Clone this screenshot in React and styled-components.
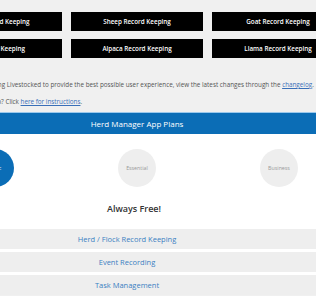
import React from "react";
import styled, { createGlobalStyle } from "styled-components";

const GlobalStyle = createGlobalStyle`
	html, body {
		margin: 0;
		padding: 0;
		background: #f0f0f0;
		overflow: hidden;
		font-family: "Open Sans", "Liberation Sans", sans-serif;
	}
`;

const PageStyled = styled.div`
	width: 414px;
	margin-left: -70px;
`;

const ButtonGridStyled = styled.div`
	display: grid;
	grid-template-columns: repeat(3, 132px);
	column-gap: 9px;
	row-gap: 8px;
	padding-top: 12px;
`;

const SpeciesButton = styled.a`
	display: flex;
	align-items: center;
	justify-content: center;
	height: 19px;
	background: #000;
	color: #fff;
	font-size: 6.3px;
	font-weight: 600;
	text-decoration: none;
`;

const IntroStyled = styled.div`
	padding-top: 18px;
	color: #555;
	font-size: 6.3px;
	line-height: 17px;
	white-space: nowrap;

	a {
		color: #3a6fb8;
		text-decoration: underline;
	}
`;

const IntroLine = styled.div`
	margin-left: ${(props) => props.$shift}px;
`;

const PlansStyled = styled.div`
	margin-top: 2px;
	background: #fff;
`;

const PlansHeader = styled.div`
	height: 21px;
	display: flex;
	align-items: center;
	justify-content: center;
	background: #0b6db6;
	border-top: 1px solid #9cc9ec;
	color: #fff;
	font-size: 8px;
`;

const PlanRow = styled.div`
	display: grid;
	grid-template-columns: repeat(3, 142px);
	margin-left: -6px;
	padding: 15px 0 15px;
`;

const PlanCell = styled.div`
	display: flex;
	justify-content: center;
`;

const PlanCircle = styled.div`
	width: 38px;
	height: 38px;
	border-radius: 50%;
	display: flex;
	align-items: center;
	justify-content: center;
	background: ${(props) => (props.$active ? "#0b6db6" : "#eeeeee")};
	color: ${(props) => (props.$active ? "#fff" : "#999")};
	font-size: 5.3px;
`;

const PlanTitle = styled.div`
	text-align: center;
	padding-right: 6px;
	color: #333;
	font-size: 9px;
	font-weight: 600;
	margin-bottom: 14px;
`;

const FeatureList = styled.div`
	display: flex;
	flex-direction: column;
	gap: 3px;
`;

const FeatureRow = styled.div`
	height: 20px;
	display: flex;
	align-items: center;
	justify-content: center;
	padding-right: 20px;
	background: #eeeeee;
	color: #3a7fc2;
	font-size: 7.5px;
`;

const species = [
	"Cattle Record Keeping",
	"Sheep Record Keeping",
	"Goat Record Keeping",
	"Pig Record Keeping",
	"Alpaca Record Keeping",
	"Llama Record Keeping",
];

const plans = [
	{ name: "Basic", active: true },
	{ name: "Essential" },
	{ name: "Business" },
];

const features = ["Herd / Flock Record Keeping", "Event Recording", "Task Management"];

function App() {
	return (
		<>
			<GlobalStyle />
			<PageStyled>
				<ButtonGridStyled>
					{species.map((name) => (
						<SpeciesButton key={name} href="#">
							{name}
						</SpeciesButton>
					))}
				</ButtonGridStyled>
				<IntroStyled>
					<IntroLine $shift={2}>
						We are always improving Livestocked to provide the best possible user experience, view the
						latest changes through the <a href="#">changelog</a>.
					</IntroLine>
					<IntroLine $shift={-8}>
						Looking for the mobile app? Click <a href="#">here for instructions</a>.
					</IntroLine>
				</IntroStyled>
				<PlansStyled>
					<PlansHeader>Herd Manager App Plans</PlansHeader>
					<PlanRow>
						{plans.map((plan) => (
							<PlanCell key={plan.name}>
								<PlanCircle $active={plan.active}>{plan.name}</PlanCircle>
							</PlanCell>
						))}
					</PlanRow>
					<PlanTitle>Always Free!</PlanTitle>
					<FeatureList>
						{features.map((feature) => (
							<FeatureRow key={feature}>{feature}</FeatureRow>
						))}
					</FeatureList>
				</PlansStyled>
			</PageStyled>
		</>
	);
}

export default App;
